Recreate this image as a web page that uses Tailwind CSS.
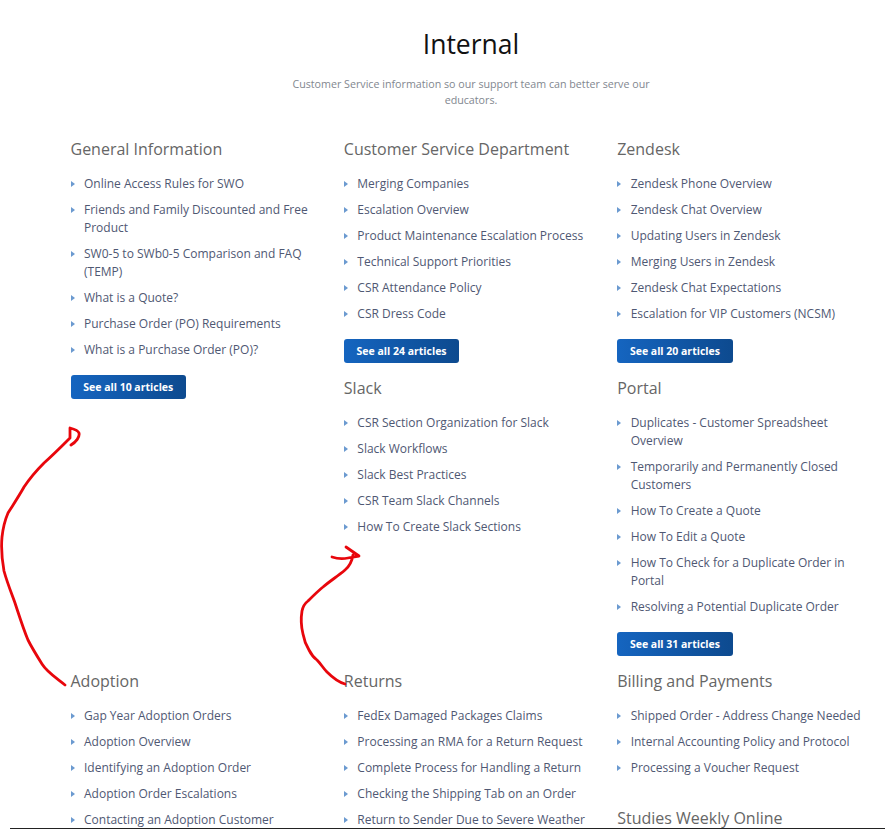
<!DOCTYPE html>
<html><head><meta charset="utf-8">
<script src="https://cdn.jsdelivr.net/npm/@tailwindcss/browser@4"></script>
</head>
<body class="bg-white">
<main class="relative h-[830px] w-[885px] overflow-hidden font-['Open_Sans',sans-serif]">
<div class="ml-[71px] w-[800px]">
<h1 class="pt-[26px] text-center text-[26.5px] leading-[36px] text-[#111]">Internal</h1>
<p class="mx-auto mt-[14px] w-[380px] text-center text-[10.7px] leading-[16px] text-[#82878f]">Customer Service information so our support team can better serve our educators.</p>
</div>
<div class="mt-[29px] ml-[70.5px] grid w-[820px] grid-cols-3 text-[12px] leading-[18px] text-[#4f5873]">
  <div class="h-[532px]">
    <section>
      <h2 class="text-[16px] leading-[24px] text-[#666]">General Information</h2>
      <ul class="mt-[14px] flex w-[240px] flex-col gap-[8px]">
        <li class="flex gap-[9.5px]"><svg class="mt-[6px] h-[6px] w-[4px] shrink-0 fill-[#6b9ad0]" viewBox="0 0 4 6"><path d="M0 0l4 3-4 3z"/></svg><span>Online Access Rules for SWO</span></li>
        <li class="flex gap-[9.5px]"><svg class="mt-[6px] h-[6px] w-[4px] shrink-0 fill-[#6b9ad0]" viewBox="0 0 4 6"><path d="M0 0l4 3-4 3z"/></svg><span>Friends and Family Discounted and Free Product</span></li>
        <li class="flex gap-[9.5px]"><svg class="mt-[6px] h-[6px] w-[4px] shrink-0 fill-[#6b9ad0]" viewBox="0 0 4 6"><path d="M0 0l4 3-4 3z"/></svg><span>SW0-5 to SWb0-5 Comparison and FAQ (TEMP)</span></li>
        <li class="flex gap-[9.5px]"><svg class="mt-[6px] h-[6px] w-[4px] shrink-0 fill-[#6b9ad0]" viewBox="0 0 4 6"><path d="M0 0l4 3-4 3z"/></svg><span>What is a Quote?</span></li>
        <li class="flex gap-[9.5px]"><svg class="mt-[6px] h-[6px] w-[4px] shrink-0 fill-[#6b9ad0]" viewBox="0 0 4 6"><path d="M0 0l4 3-4 3z"/></svg><span>Purchase Order (PO) Requirements</span></li>
        <li class="flex gap-[9.5px]"><svg class="mt-[6px] h-[6px] w-[4px] shrink-0 fill-[#6b9ad0]" viewBox="0 0 4 6"><path d="M0 0l4 3-4 3z"/></svg><span>What is a Purchase Order (PO)?</span></li>
      </ul>
      <a class="mt-[16px] flex h-[24px] w-[115.5px] items-center justify-center rounded-[3px] bg-gradient-to-r from-[#1565c0] to-[#0d4a8f] text-[10.5px] font-bold text-white">See all 10 articles</a>
    </section>
  </div>
  <div class="h-[532px]">
    <section>
      <h2 class="text-[16px] leading-[24px] text-[#666]">Customer Service Department</h2>
      <ul class="mt-[14px] flex w-[250px] flex-col gap-[8px]">
        <li class="flex gap-[9.5px]"><svg class="mt-[6px] h-[6px] w-[4px] shrink-0 fill-[#6b9ad0]" viewBox="0 0 4 6"><path d="M0 0l4 3-4 3z"/></svg><span>Merging Companies</span></li>
        <li class="flex gap-[9.5px]"><svg class="mt-[6px] h-[6px] w-[4px] shrink-0 fill-[#6b9ad0]" viewBox="0 0 4 6"><path d="M0 0l4 3-4 3z"/></svg><span>Escalation Overview</span></li>
        <li class="flex gap-[9.5px]"><svg class="mt-[6px] h-[6px] w-[4px] shrink-0 fill-[#6b9ad0]" viewBox="0 0 4 6"><path d="M0 0l4 3-4 3z"/></svg><span>Product Maintenance Escalation Process</span></li>
        <li class="flex gap-[9.5px]"><svg class="mt-[6px] h-[6px] w-[4px] shrink-0 fill-[#6b9ad0]" viewBox="0 0 4 6"><path d="M0 0l4 3-4 3z"/></svg><span>Technical Support Priorities</span></li>
        <li class="flex gap-[9.5px]"><svg class="mt-[6px] h-[6px] w-[4px] shrink-0 fill-[#6b9ad0]" viewBox="0 0 4 6"><path d="M0 0l4 3-4 3z"/></svg><span>CSR Attendance Policy</span></li>
        <li class="flex gap-[9.5px]"><svg class="mt-[6px] h-[6px] w-[4px] shrink-0 fill-[#6b9ad0]" viewBox="0 0 4 6"><path d="M0 0l4 3-4 3z"/></svg><span>CSR Dress Code</span></li>
      </ul>
      <a class="mt-[16px] flex h-[24px] w-[115.5px] items-center justify-center rounded-[3px] bg-gradient-to-r from-[#1565c0] to-[#0d4a8f] text-[10.5px] font-bold text-white">See all 24 articles</a>
    </section>
    <section class="mt-[13px]">
      <h2 class="text-[16px] leading-[24px] text-[#666]">Slack</h2>
      <ul class="mt-[14px] flex w-[250px] flex-col gap-[8px]">
        <li class="flex gap-[9.5px]"><svg class="mt-[6px] h-[6px] w-[4px] shrink-0 fill-[#6b9ad0]" viewBox="0 0 4 6"><path d="M0 0l4 3-4 3z"/></svg><span>CSR Section Organization for Slack</span></li>
        <li class="flex gap-[9.5px]"><svg class="mt-[6px] h-[6px] w-[4px] shrink-0 fill-[#6b9ad0]" viewBox="0 0 4 6"><path d="M0 0l4 3-4 3z"/></svg><span>Slack Workflows</span></li>
        <li class="flex gap-[9.5px]"><svg class="mt-[6px] h-[6px] w-[4px] shrink-0 fill-[#6b9ad0]" viewBox="0 0 4 6"><path d="M0 0l4 3-4 3z"/></svg><span>Slack Best Practices</span></li>
        <li class="flex gap-[9.5px]"><svg class="mt-[6px] h-[6px] w-[4px] shrink-0 fill-[#6b9ad0]" viewBox="0 0 4 6"><path d="M0 0l4 3-4 3z"/></svg><span>CSR Team Slack Channels</span></li>
        <li class="flex gap-[9.5px]"><svg class="mt-[6px] h-[6px] w-[4px] shrink-0 fill-[#6b9ad0]" viewBox="0 0 4 6"><path d="M0 0l4 3-4 3z"/></svg><span>How To Create Slack Sections</span></li>
      </ul>
    </section>
  </div>
  <div class="h-[532px]">
    <section>
      <h2 class="text-[16px] leading-[24px] text-[#666]">Zendesk</h2>
      <ul class="mt-[14px] flex w-[240px] flex-col gap-[8px]">
        <li class="flex gap-[9.5px]"><svg class="mt-[6px] h-[6px] w-[4px] shrink-0 fill-[#6b9ad0]" viewBox="0 0 4 6"><path d="M0 0l4 3-4 3z"/></svg><span>Zendesk Phone Overview</span></li>
        <li class="flex gap-[9.5px]"><svg class="mt-[6px] h-[6px] w-[4px] shrink-0 fill-[#6b9ad0]" viewBox="0 0 4 6"><path d="M0 0l4 3-4 3z"/></svg><span>Zendesk Chat Overview</span></li>
        <li class="flex gap-[9.5px]"><svg class="mt-[6px] h-[6px] w-[4px] shrink-0 fill-[#6b9ad0]" viewBox="0 0 4 6"><path d="M0 0l4 3-4 3z"/></svg><span>Updating Users in Zendesk</span></li>
        <li class="flex gap-[9.5px]"><svg class="mt-[6px] h-[6px] w-[4px] shrink-0 fill-[#6b9ad0]" viewBox="0 0 4 6"><path d="M0 0l4 3-4 3z"/></svg><span>Merging Users in Zendesk</span></li>
        <li class="flex gap-[9.5px]"><svg class="mt-[6px] h-[6px] w-[4px] shrink-0 fill-[#6b9ad0]" viewBox="0 0 4 6"><path d="M0 0l4 3-4 3z"/></svg><span>Zendesk Chat Expectations</span></li>
        <li class="flex gap-[9.5px]"><svg class="mt-[6px] h-[6px] w-[4px] shrink-0 fill-[#6b9ad0]" viewBox="0 0 4 6"><path d="M0 0l4 3-4 3z"/></svg><span>Escalation for VIP Customers (NCSM)</span></li>
      </ul>
      <a class="mt-[16px] flex h-[24px] w-[115.5px] items-center justify-center rounded-[3px] bg-gradient-to-r from-[#1565c0] to-[#0d4a8f] text-[10.5px] font-bold text-white">See all 20 articles</a>
    </section>
    <section class="mt-[13px]">
      <h2 class="text-[16px] leading-[24px] text-[#666]">Portal</h2>
      <ul class="mt-[14px] flex w-[240px] flex-col gap-[8px]">
        <li class="flex gap-[9.5px]"><svg class="mt-[6px] h-[6px] w-[4px] shrink-0 fill-[#6b9ad0]" viewBox="0 0 4 6"><path d="M0 0l4 3-4 3z"/></svg><span>Duplicates - Customer Spreadsheet Overview</span></li>
        <li class="flex gap-[9.5px]"><svg class="mt-[6px] h-[6px] w-[4px] shrink-0 fill-[#6b9ad0]" viewBox="0 0 4 6"><path d="M0 0l4 3-4 3z"/></svg><span>Temporarily and Permanently Closed Customers</span></li>
        <li class="flex gap-[9.5px]"><svg class="mt-[6px] h-[6px] w-[4px] shrink-0 fill-[#6b9ad0]" viewBox="0 0 4 6"><path d="M0 0l4 3-4 3z"/></svg><span>How To Create a Quote</span></li>
        <li class="flex gap-[9.5px]"><svg class="mt-[6px] h-[6px] w-[4px] shrink-0 fill-[#6b9ad0]" viewBox="0 0 4 6"><path d="M0 0l4 3-4 3z"/></svg><span>How To Edit a Quote</span></li>
        <li class="flex gap-[9.5px]"><svg class="mt-[6px] h-[6px] w-[4px] shrink-0 fill-[#6b9ad0]" viewBox="0 0 4 6"><path d="M0 0l4 3-4 3z"/></svg><span>How To Check for a Duplicate Order in Portal</span></li>
        <li class="flex gap-[9.5px]"><svg class="mt-[6px] h-[6px] w-[4px] shrink-0 fill-[#6b9ad0]" viewBox="0 0 4 6"><path d="M0 0l4 3-4 3z"/></svg><span>Resolving a Potential Duplicate Order</span></li>
      </ul>
      <a class="mt-[16px] flex h-[24px] w-[115.5px] items-center justify-center rounded-[3px] bg-gradient-to-r from-[#1565c0] to-[#0d4a8f] text-[10.5px] font-bold text-white">See all 31 articles</a>
    </section>
  </div>
  <div>
    <section>
      <h2 class="text-[16px] leading-[24px] text-[#666]">Adoption</h2>
      <ul class="mt-[14px] flex w-[250px] flex-col gap-[8px]">
        <li class="flex gap-[9.5px]"><svg class="mt-[6px] h-[6px] w-[4px] shrink-0 fill-[#6b9ad0]" viewBox="0 0 4 6"><path d="M0 0l4 3-4 3z"/></svg><span>Gap Year Adoption Orders</span></li>
        <li class="flex gap-[9.5px]"><svg class="mt-[6px] h-[6px] w-[4px] shrink-0 fill-[#6b9ad0]" viewBox="0 0 4 6"><path d="M0 0l4 3-4 3z"/></svg><span>Adoption Overview</span></li>
        <li class="flex gap-[9.5px]"><svg class="mt-[6px] h-[6px] w-[4px] shrink-0 fill-[#6b9ad0]" viewBox="0 0 4 6"><path d="M0 0l4 3-4 3z"/></svg><span>Identifying an Adoption Order</span></li>
        <li class="flex gap-[9.5px]"><svg class="mt-[6px] h-[6px] w-[4px] shrink-0 fill-[#6b9ad0]" viewBox="0 0 4 6"><path d="M0 0l4 3-4 3z"/></svg><span>Adoption Order Escalations</span></li>
        <li class="flex gap-[9.5px]"><svg class="mt-[6px] h-[6px] w-[4px] shrink-0 fill-[#6b9ad0]" viewBox="0 0 4 6"><path d="M0 0l4 3-4 3z"/></svg><span>Contacting an Adoption Customer</span></li>
      </ul>
    </section>
  </div>
  <div>
    <section>
      <h2 class="text-[16px] leading-[24px] text-[#666]">Returns</h2>
      <ul class="mt-[14px] flex w-[250px] flex-col gap-[8px]">
        <li class="flex gap-[9.5px]"><svg class="mt-[6px] h-[6px] w-[4px] shrink-0 fill-[#6b9ad0]" viewBox="0 0 4 6"><path d="M0 0l4 3-4 3z"/></svg><span>FedEx Damaged Packages Claims</span></li>
        <li class="flex gap-[9.5px]"><svg class="mt-[6px] h-[6px] w-[4px] shrink-0 fill-[#6b9ad0]" viewBox="0 0 4 6"><path d="M0 0l4 3-4 3z"/></svg><span>Processing an RMA for a Return Request</span></li>
        <li class="flex gap-[9.5px]"><svg class="mt-[6px] h-[6px] w-[4px] shrink-0 fill-[#6b9ad0]" viewBox="0 0 4 6"><path d="M0 0l4 3-4 3z"/></svg><span>Complete Process for Handling a Return</span></li>
        <li class="flex gap-[9.5px]"><svg class="mt-[6px] h-[6px] w-[4px] shrink-0 fill-[#6b9ad0]" viewBox="0 0 4 6"><path d="M0 0l4 3-4 3z"/></svg><span>Checking the Shipping Tab on an Order</span></li>
        <li class="flex gap-[9.5px]"><svg class="mt-[6px] h-[6px] w-[4px] shrink-0 fill-[#6b9ad0]" viewBox="0 0 4 6"><path d="M0 0l4 3-4 3z"/></svg><span>Return to Sender Due to Severe Weather</span></li>
      </ul>
    </section>
  </div>
  <div>
    <section>
      <h2 class="text-[16px] leading-[24px] text-[#666]">Billing and Payments</h2>
      <ul class="mt-[14px] flex w-[250px] flex-col gap-[8px]">
        <li class="flex gap-[9.5px]"><svg class="mt-[6px] h-[6px] w-[4px] shrink-0 fill-[#6b9ad0]" viewBox="0 0 4 6"><path d="M0 0l4 3-4 3z"/></svg><span>Shipped Order - Address Change Needed</span></li>
        <li class="flex gap-[9.5px]"><svg class="mt-[6px] h-[6px] w-[4px] shrink-0 fill-[#6b9ad0]" viewBox="0 0 4 6"><path d="M0 0l4 3-4 3z"/></svg><span>Internal Accounting Policy and Protocol</span></li>
        <li class="flex gap-[9.5px]"><svg class="mt-[6px] h-[6px] w-[4px] shrink-0 fill-[#6b9ad0]" viewBox="0 0 4 6"><path d="M0 0l4 3-4 3z"/></svg><span>Processing a Voucher Request</span></li>
      </ul>
    </section>
    <section class="mt-[29px]">
      <h2 class="text-[16px] leading-[24px] text-[#666]">Studies Weekly Online</h2>
    </section>
  </div>
</div>
<svg class="pointer-events-none absolute inset-0 h-[830px] w-[885px]" viewBox="0 0 885 830" fill="none" stroke="#e8060c" stroke-width="2.8" stroke-linecap="round" stroke-linejoin="round">
  <path d="M65 685C55 677 47 672 42 664C37 656 32 648 28 640C23 628 19 615 15 603C11 592 7 582 4 571C2 560 1 548 2 537C3 528 5 520 8 513C13 505 19 496 24 487C30 478 37 470 44 463C53 455 62 446 70 438L70 428C74 429 78 430 79 433C80 437 76 442 71 445"/>
  <path d="M345 684C338 682 332 677 327 672C323 668 321 664 317 660C313 657 311 654 309 650C306 645 304 640 303 634C301 626 301 617 302 611C303 606 304 604 308 601C313 596 318 591 323 587C330 581 338 576 345 570C350 566 352 561 353 555M332 557C338 559 343 559 348 558L359 556L346 547"/>
</svg>
<div class="absolute bottom-[1px] left-[10px] right-0 h-[1px] bg-[#222]"></div>
</main>
</body></html>
